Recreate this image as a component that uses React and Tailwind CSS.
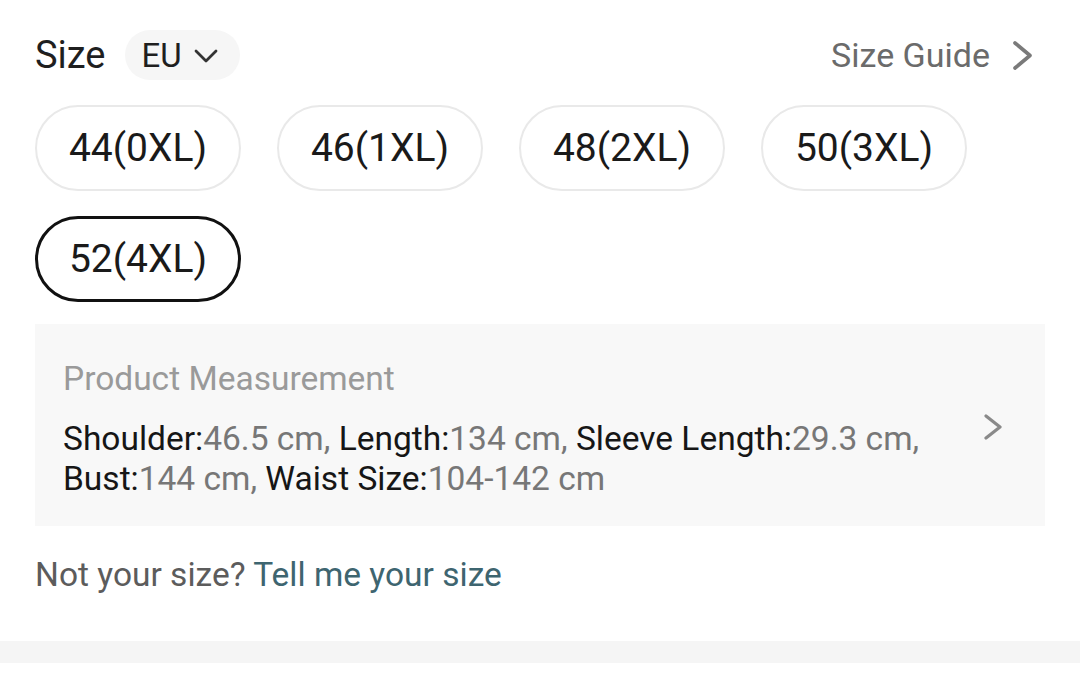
import React from "react";

const SIZES = ["44(0XL)", "46(1XL)", "48(2XL)", "50(3XL)", "52(4XL)"];

const MEASURES = [
  ["Shoulder:", "46.5 cm, "],
  ["Length:", "134 cm, "],
  ["Sleeve Length:", "29.3 cm, "],
  ["Bust:", "144 cm, "],
  ["Waist Size:", "104-142 cm"],
];

function Chevron({ dir = "right", className, w, h, sw }) {
  const pts = dir === "down" ? `2,2 ${w / 2},${h - 2} ${w - 2},2` : `2,2 ${w - 2},${h / 2} 2,${h - 2}`;
  return (
    <svg width={w} height={h} viewBox={`0 0 ${w} ${h}`} className={className} fill="none">
      <polyline points={pts} stroke="currentColor" strokeWidth={sw} strokeLinecap="round" strokeLinejoin="round" />
    </svg>
  );
}

export default function App() {
  return (
    <div className="w-[1080px] h-[684px] bg-white overflow-hidden font-['Roboto',sans-serif] text-[#222]">
      <div className="px-[35px] pt-[30px]">
        {/* header */}
        <div className="flex items-center h-[50px]">
          <span className="text-[38px] leading-none text-[#1f1f1f]">Size</span>
          <button className="ml-[19px] h-[50px] pl-[17px] pr-[22px] rounded-full bg-[#f6f6f6] flex items-center gap-[12px]">
            <span className="text-[33px] leading-none text-[#1f1f1f]">EU</span>
            <Chevron dir="down" w={24} h={14} sw={2.8} className="text-[#333] mt-[2px]" />
          </button>
          <div className="ml-auto flex items-center gap-[23px] pr-[13px]">
            <span className="text-[34px] leading-none text-[#6b6b6b]">Size Guide</span>
            <Chevron w={19} h={29} sw={3.6} className="text-[#7a7a7a]" />
          </div>
        </div>

        {/* size options */}
        <div className="mt-[25px] flex flex-wrap gap-x-[36px] gap-y-[25px]">
          {SIZES.map((s, i) => (
            <button
              key={s}
              className={
                i === 4
                  ? "h-[86px] w-[206px] rounded-full border-[3px] border-[#111] flex items-center justify-center text-[39px] leading-none text-[#1a1a1a]"
                  : "h-[86px] w-[206px] rounded-full border-2 border-[#e9e9e9] flex items-center justify-center text-[39px] leading-none text-[#1a1a1a]"
              }
            >
              {s}
            </button>
          ))}
        </div>

        {/* measurement box */}
        <div className="mt-[22px] bg-[#f8f8f8] h-[202px] px-[28px] pt-[35px] flex">
          <div className="flex-1">
            <p className="text-[33.5px] leading-[40px] text-[#9a9a9a]">Product Measurement</p>
            <p className="mt-[20px] text-[33.5px] leading-[40px] w-[880px]">
              {MEASURES.map(([k, v]) => (
                <React.Fragment key={k}>
                  <span className="text-[#161616]">{k}</span>
                  <span className="text-[#777]">{v}</span>
                </React.Fragment>
              ))}
            </p>
          </div>
          <div className="pt-[55px] pr-[15px]">
            <Chevron w={18} h={26} sw={3.2} className="text-[#8a8a8a]" />
          </div>
        </div>

        {/* not your size */}
        <p className="mt-[29px] text-[33.5px] leading-[40px]">
          <span className="text-[#5c5c5c]">Not your size? </span>
          <span className="text-[#3e6570]">Tell me your size</span>
        </p>
      </div>

      <div className="mt-[46px] h-[22px] bg-[#f5f5f5]" />
    </div>
  );
}
